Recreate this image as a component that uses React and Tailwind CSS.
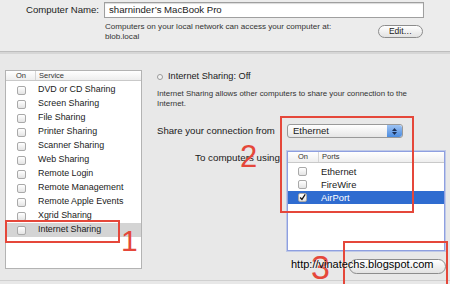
import React from 'react';

const services = [
    'DVD or CD Sharing',
    'Screen Sharing',
    'File Sharing',
    'Printer Sharing',
    'Scanner Sharing',
    'Web Sharing',
    'Remote Login',
    'Remote Management',
    'Remote Apple Events',
    'Xgrid Sharing',
    'Internet Sharing',
];

const ports = ['Ethernet', 'FireWire', 'AirPort'];

const Box = ({ checked }) => (
    <div className="w-[9px] h-[9px] rounded-[2px] border border-[#a9a9a9] bg-gradient-to-b from-white to-[#e4e4e4] flex items-center justify-center">
        {checked ? (
            <svg width="9" height="9" viewBox="0 0 9 9">
                <path d="M1.5 4.5 L3.8 7 L8 0.5" fill="none" stroke="#111" strokeWidth="1.6" />
            </svg>
        ) : null}
    </div>
);

const App = () => (
    <div className="relative w-[450px] h-[284px] overflow-hidden bg-[#e8e8e8] text-[#1a1a1a] font-['Liberation_Sans',Arial,sans-serif]">
        {/* computer name */}
        <div className="h-[51px] bg-[#ececec] pt-[2px]">
            <div className="flex items-center">
                <div className="w-[99px] text-right text-[9.6px] leading-[16px] text-[#222]">Computer Name:</div>
                <div className="ml-[5px] w-[320px] h-[16px] border border-[#9f9f9f] bg-white pl-[4px] text-[9.6px] leading-[14px] shadow-[inset_0_1px_1px_rgba(0,0,0,0.15)]">
                    sharninder’s MacBook Pro
                </div>
            </div>
            <div className="flex pl-[105px] mt-[4px]">
                <div className="text-[8.1px] leading-[10px] text-[#333]">
                    <p>Computers on your local network can access your computer at:</p>
                    <p>blob.local</p>
                </div>
                <div className="ml-auto mr-[27px] mt-[3px] w-[45px] h-[13px] rounded-full border border-[#8c8c8c] bg-gradient-to-b from-white to-[#e2e2e2] text-[8.5px] leading-[11px] text-center text-[#222]">
                    Edit…
                </div>
            </div>
        </div>
        <div className="h-[3px] border-t border-[#bdbdbd] bg-[#d6d6d6]" />

        <div className="flex pl-[5px] pt-[16px]">
            {/* service list */}
            <div className="w-[137px] h-[199px] border border-[#b3b3b3] bg-white">
                <div className="flex h-[10px] items-center border-b border-[#c9c9c9] bg-gradient-to-b from-white to-[#eeeeee] text-[7.5px] leading-[10px] text-[#333]">
                    <div className="w-[29px] pl-[10px]">On</div>
                    <div className="h-full border-l border-[#d5d5d5] pl-[3px]">Service</div>
                </div>
                <div className="pt-[2px]">
                    {services.map((s) => (
                        <div
                            key={s}
                            className={`flex h-[14px] items-center text-[8.9px] ${s === 'Internet Sharing' ? 'bg-[#d4d4d4]' : ''}`}
                        >
                            <div className="w-[32px] pl-[11px]">
                                <Box />
                            </div>
                            <span>{s}</span>
                        </div>
                    ))}
                </div>
            </div>

            {/* detail pane */}
            <div className="ml-[15px] w-[289px]">
                <div className="flex items-center h-[12px] mt-[1px]">
                    <div className="w-[6px] h-[6px] rounded-full border border-[#9a9a9a] bg-[#f4f4f4]" />
                    <span className="ml-[5px] text-[9.2px]">Internet Sharing: Off</span>
                </div>
                <div className="mt-[6px] text-[7.9px] leading-[9.5px] text-[#333]">
                    <p>Internet Sharing allows other computers to share your connection to the</p>
                    <p>Internet.</p>
                </div>
                <div className="mt-[16px] flex items-center">
                    <div className="w-[130px] text-[9.6px]">Share your connection from</div>
                    <div className="flex h-[14px] w-[116px] rounded-[3px] border border-[#999] bg-gradient-to-b from-white to-[#e6e6e6]">
                        <span className="pl-[5px] text-[9.5px] leading-[12px]">Ethernet</span>
                        <div className="ml-auto w-[15px] h-full rounded-r-[3px] bg-gradient-to-b from-[#9dc2f2] to-[#4b8ce0] flex flex-col items-center justify-center gap-[1px]">
                            <svg width="5" height="3" viewBox="0 0 5 3"><path d="M0 3 L2.5 0 L5 3Z" fill="#1b2f55" /></svg>
                            <svg width="5" height="3" viewBox="0 0 5 3"><path d="M0 0 L2.5 3 L5 0Z" fill="#1b2f55" /></svg>
                        </div>
                    </div>
                </div>
                <div className="mt-[13px] flex items-start">
                    <div className="w-[130px] pr-[7px] text-right text-[9.8px] leading-[14px]">To computers using</div>
                    <div className="w-[158px] h-[100px] border border-[#8e9fe0] bg-white shadow-[0_0_0_1px_rgba(150,170,230,0.5)]">
                        <div className="flex h-[11px] items-center border-b border-[#c9c9c9] bg-gradient-to-b from-white to-[#eeeeee] text-[7.5px] leading-[10px] text-[#333]">
                            <div className="w-[30px] pl-[10px]">On</div>
                            <div className="h-full border-l border-[#d5d5d5] pl-[3px]">Ports</div>
                        </div>
                        <div className="pt-[2px]">
                            {ports.map((p) => (
                                <div
                                    key={p}
                                    className={`flex h-[13px] items-center text-[9.4px] ${p === 'AirPort' ? 'bg-[#2f6cd0] text-white' : ''}`}
                                >
                                    <div className="w-[33px] pl-[10px]">
                                        <Box checked={p === 'AirPort'} />
                                    </div>
                                    <span>{p}</span>
                                </div>
                            ))}
                        </div>
                    </div>
                </div>
                <div className="mt-[8px] flex justify-end">
                    <div className="w-[97px] h-[15px] rounded-full border border-[#8c8c8c] bg-gradient-to-b from-white to-[#e2e2e2]" />
                </div>
            </div>
        </div>

        <div className="absolute left-0 right-0 top-[280px] border-t border-[#d0d0d0]" />

        {/* annotations */}
        <div className="absolute left-[5px] top-[220px] w-[115px] h-[23px] border-2 border-[#e5473a]" />
        <div className="absolute left-[121px] top-[226px] text-[30px] leading-[30px] text-[#e5473a]">1</div>
        <div className="absolute left-[280px] top-[116px] w-[134px] h-[97px] border-2 border-[#e5473a]" />
        <div className="absolute left-[240px] top-[141px] text-[31px] leading-[31px] text-[#e5473a]">2</div>
        <div className="absolute left-[343px] top-[241px] w-[105px] h-[50px] border-2 border-[#e5473a]" />
        <div className="absolute left-[311px] top-[250px] text-[34px] leading-[34px] text-[#e5473a]">3</div>
        <div className="absolute left-[291px] top-[257px] text-[11px] leading-[14px] text-black [text-shadow:0_0_2px_white]">
            http://vinatechs.blogspot.com
        </div>
    </div>
);

export default App;
